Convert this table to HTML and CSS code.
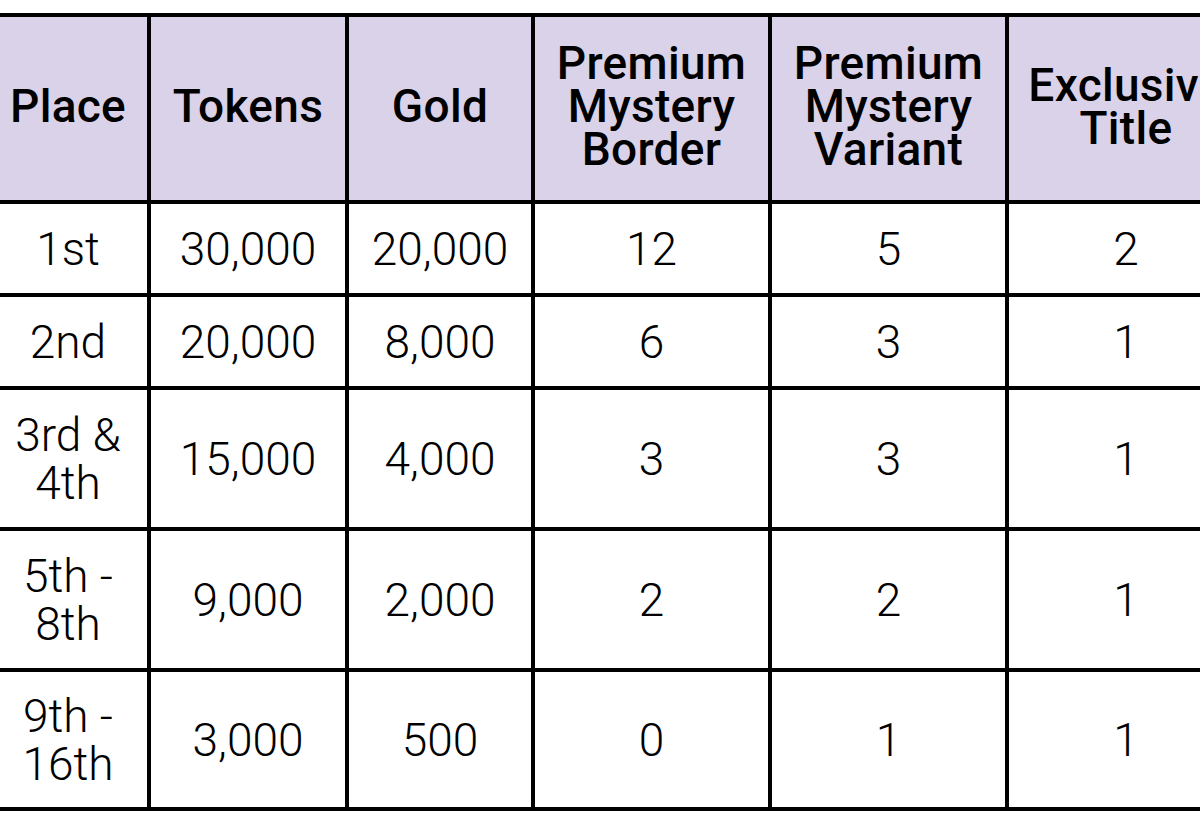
FILE: index.html
```
<!DOCTYPE html>
<html>
<head>
<meta charset="utf-8">
<link rel="stylesheet" href="styles.css">
</head>
<body>
<div class="table">
  <div class="cell head">Place</div>
  <div class="cell head">Tokens</div>
  <div class="cell head">Gold</div>
  <div class="cell head">Premium Mystery Border</div>
  <div class="cell head">Premium Mystery Variant</div>
  <div class="cell head">Exclusive Title</div>

  <div class="cell">1st</div>
  <div class="cell">30,000</div>
  <div class="cell">20,000</div>
  <div class="cell">12</div>
  <div class="cell">5</div>
  <div class="cell">2</div>

  <div class="cell">2nd</div>
  <div class="cell">20,000</div>
  <div class="cell">8,000</div>
  <div class="cell">6</div>
  <div class="cell">3</div>
  <div class="cell">1</div>

  <div class="cell">3rd &amp; 4th</div>
  <div class="cell">15,000</div>
  <div class="cell">4,000</div>
  <div class="cell">3</div>
  <div class="cell">3</div>
  <div class="cell">1</div>

  <div class="cell">5th - 8th</div>
  <div class="cell">9,000</div>
  <div class="cell">2,000</div>
  <div class="cell">2</div>
  <div class="cell">2</div>
  <div class="cell">1</div>

  <div class="cell">9th - 16th</div>
  <div class="cell">3,000</div>
  <div class="cell">500</div>
  <div class="cell">0</div>
  <div class="cell">1</div>
  <div class="cell">1</div>
</div>
</body>
</html>
```
FILE: styles.css
```
html, body {
  margin: 0;
  padding: 0;
  overflow: hidden;
  background: #ffffff;
}
body {
  width: 1200px;
  height: 825px;
  font-family: Roboto, "Liberation Sans", sans-serif;
  color: #000;
}
.table {
  display: grid;
  grid-template-columns: 158px 194px 182px 233px 233px 234px;
  grid-template-rows: 183px 89px 89px 137px 137px 135px;
  gap: 4px;
  padding: 4px;
  background: #000;
  width: max-content;
  margin: 13px 0 0 -15px;
}
.cell {
  background: #ffffff;
  display: flex;
  align-items: center;
  justify-content: center;
  text-align: center;
  font-size: 46px;
  font-weight: 300;
  line-height: 48px;
  padding: 0 2px;
}
.head {
  background: #d9d2e9;
  font-size: 46px;
  font-weight: 500;
  letter-spacing: 0.3px;
  line-height: 43px;
  padding-bottom: 4px;
}
```
